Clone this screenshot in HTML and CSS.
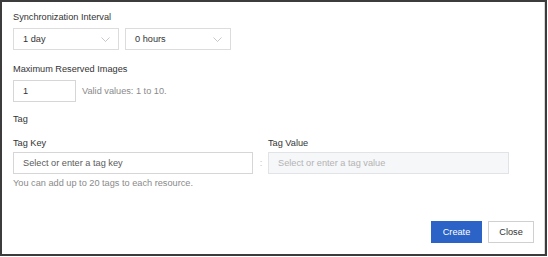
FILE: index.html
```html
<!DOCTYPE html>
<html lang="en">
<head>
    <meta charset="UTF-8">
    <title>Create Rule</title>
    <link rel="stylesheet" href="styles.css">
</head>
<body>
    <div class="dialog">
        <div class="label">Synchronization Interval</div>
        <div class="select-row">
            <div class="select">
                <span>1 day</span>
                <svg class="chevron" width="9" height="5" viewBox="0 0 9 5"><path d="M0.5 0.5 L4.5 4.5 L8.5 0.5" fill="none" stroke="#b0b0b0" stroke-width="0.7"/></svg>
            </div>
            <div class="select">
                <span>0 hours</span>
                <svg class="chevron" width="9" height="5" viewBox="0 0 9 5"><path d="M0.5 0.5 L4.5 4.5 L8.5 0.5" fill="none" stroke="#b0b0b0" stroke-width="0.7"/></svg>
            </div>
        </div>

        <div class="label second">Maximum Reserved Images</div>
        <div class="count-row">
            <div class="input small">1</div>
            <span class="hint">Valid values: 1 to 10.</span>
        </div>

        <div class="label tag-title">Tag</div>
        <div class="tag-grid">
            <div class="label sub">Tag Key</div>
            <div></div>
            <div class="label sub">Tag Value</div>
            <div class="input wide key">Select or enter a tag key</div>
            <div class="colon">:</div>
            <div class="input wide disabled">Select or enter a tag value</div>
            <div class="help">You can add up to 20 tags to each resource.</div>
        </div>

        <div class="footer">
            <button class="btn primary">Create</button>
            <button class="btn">Close</button>
        </div>
    </div>
</body>
</html>
```

FILE: styles.css
```css
body {
    margin: 0;
    font-family: "Liberation Sans", Arial, sans-serif;
    font-size: 9.2px;
    color: #333;
    background: #fff;
}
.dialog {
    width: 547px;
    height: 256px;
    box-sizing: border-box;
    border: 2px solid #3c3c3c;
    box-shadow: inset -1px 0 0 #d8d8d8;
    padding: 9px 11px 11px 11px;
    display: flex;
    flex-direction: column;
}
.label {
    line-height: 12px;
    color: #333;
}
.label.second {
    margin-top: 13px;
}
.label.tag-title {
    margin-top: 11px;
}
.select-row {
    display: flex;
    gap: 6px;
    margin-top: 5px;
}
.select {
    width: 106px;
    height: 22px;
    box-sizing: border-box;
    border: 1px solid #dcdcdc;
    padding: 0 8px 0 9px;
    display: flex;
    align-items: center;
    justify-content: space-between;
}
.count-row {
    display: flex;
    align-items: center;
    margin-top: 5px;
}
.input {
    height: 22px;
    box-sizing: border-box;
    border: 1px solid #d6d6d6;
    padding: 0 9px;
    display: flex;
    align-items: center;
}
.input.small {
    width: 63px;
}
.hint {
    margin-left: 6px;
    color: #8a8a8a;
}
.tag-grid {
    display: grid;
    grid-template-columns: 240px 15px 241px;
    margin-top: 12px;
}
.label.sub {
    margin-bottom: 3px;
}
.input.key {
    color: #5a5a5a;
}
.input.disabled {
    background: #f6f7f9;
    border-color: #e1e3e6;
    color: #b3b3b3;
}
.colon {
    display: flex;
    align-items: center;
    justify-content: center;
    color: #c4c4c4;
    padding-left: 1px;
}
.help {
    grid-column: 1 / 4;
    margin-top: 3px;
    line-height: 12px;
    color: #8a8a8a;
}
.footer {
    margin-top: auto;
    display: flex;
    justify-content: flex-end;
    gap: 6px;
}
.btn {
    width: 46px;
    height: 22px;
    padding: 0;
    font-family: inherit;
    font-size: 9.2px;
    border: 1px solid #d0d0d0;
    background: #fff;
    color: #333;
    cursor: pointer;
}
.btn.primary {
    width: 51px;
    background: #2b63c6;
    border-color: #2b63c6;
    color: #fff;
}
```
